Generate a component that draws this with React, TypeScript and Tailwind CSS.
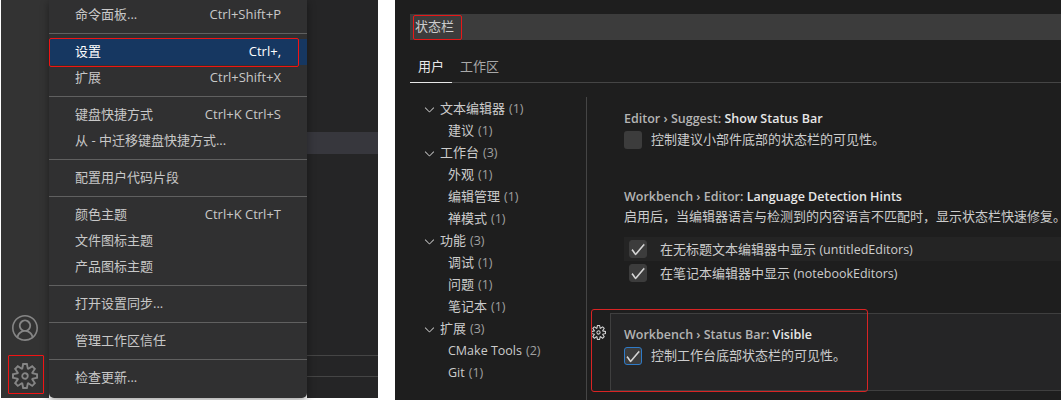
import React from 'react';
import { VscAccount, VscCheck, VscChevronDown, VscSettingsGear } from 'react-icons/vsc';

const FONT = "font-['Open_Sans','Noto_Sans_CJK_SC',sans-serif]";

type Item = { label: string; keys?: string; active?: boolean };

const menuGroups: Item[][] = [
  [{ label: '命令面板...', keys: 'Ctrl+Shift+P' }],
  [{ label: '设置', keys: 'Ctrl+,', active: true }, { label: '扩展', keys: 'Ctrl+Shift+X' }],
  [{ label: '键盘快捷方式', keys: 'Ctrl+K Ctrl+S' }, { label: '从 - 中迁移键盘快捷方式...' }],
  [{ label: '配置用户代码片段' }],
  [{ label: '颜色主题', keys: 'Ctrl+K Ctrl+T' }, { label: '文件图标主题' }, { label: '产品图标主题' }],
  [{ label: '打开设置同步...' }],
  [{ label: '管理工作区信任' }],
  [{ label: '检查更新...' }],
];

const tree = [
  { label: '文本编辑器', count: 1, top: true },
  { label: '建议', count: 1 },
  { label: '工作台', count: 3, top: true },
  { label: '外观', count: 1 },
  { label: '编辑管理', count: 1 },
  { label: '禅模式', count: 1 },
  { label: '功能', count: 3, top: true },
  { label: '调试', count: 1 },
  { label: '问题', count: 1 },
  { label: '笔记本', count: 1 },
  { label: '扩展', count: 3, top: true },
  { label: 'CMake Tools', count: 2, latin: true },
  { label: 'Git', count: 1, latin: true },
];

function Check({ focus }: { focus?: boolean }) {
  return (
    <span className={`flex h-[18px] w-[18px] shrink-0 items-center justify-center rounded-[3px] border bg-[#3c3c3c] text-[#e6e6e6] ${focus ? 'border-[#2f7bc8]' : 'border-[#3c3c3c]'}`}>
      <VscCheck size={17} className="stroke-current stroke-[0.6px]" />
    </span>
  );
}

function Menu() {
  return (
    <div className="relative z-10 h-[398px] w-[258px] shrink-0 rounded-b-[5px] bg-[#303031] pt-[2px] text-[13px] text-[#c8c8c8] shadow-[0_2px_8px_rgba(0,0,0,0.4)]">
      {menuGroups.map((group, i) => (
        <div key={i}>
          {i > 0 && (
            <div className="flex h-[11px] items-center">
              <div className="h-px w-full bg-[#606060]" />
            </div>
          )}
          {group.map((item) => (
            <div
              key={item.label}
              className={`flex h-[26px] items-center justify-between pl-[26px] pr-[26px] ${item.active ? 'bg-[#163761] text-white' : ''}`}
            >
              <span>{item.label}</span>
              {item.keys && <span>{item.keys}</span>}
            </div>
          ))}
        </div>
      ))}
    </div>
  );
}

function LeftShot() {
  return (
    <div className="relative flex h-[398px] w-[378px] shrink-0 pl-px">
      <div className="flex h-full w-[48px] shrink-0 flex-col items-center justify-end bg-[#333333] pb-[9px] text-[#858585]">
        <VscAccount size={26} className="mb-[22px]" />
        <VscSettingsGear size={26} />
      </div>
      <Menu />
      <div className="flex flex-1 flex-col bg-[#252526] pt-[132px]">
        <div className="h-[22px] bg-[#37373d]" />
        <div className="mt-[201px] h-[22px] border-y border-[#454545]" />
      </div>
      <div className="absolute left-[49px] top-[38px] z-20 h-[29px] w-[250px] rounded-[2px] border border-[#f01414]" />
      <div className="absolute left-[8px] top-[355px] z-20 h-[39px] w-[36px] rounded-[1px] border border-[#f01414]" />
    </div>
  );
}

function TreePanel() {
  return (
    <div className="w-[176px] shrink-0 pt-px text-[13px] text-[#cccccc]">
      {tree.map((row) => (
        <div key={row.label} className={`flex h-[22px] items-center ${row.top ? 'pl-[12px]' : 'pl-[38px]'}`}>
          {row.top && <VscChevronDown size={15} className="mr-[3px] text-[#c5c5c5]" />}
          <span className={row.latin ? 'text-[12.5px]' : ''}>{row.label}</span>
          <span className="ml-1 text-[12.5px] text-[#a0a0a0]">({row.count})</span>
        </div>
      ))}
    </div>
  );
}

function Title({ crumb, name }: { crumb: string; name: string }) {
  return (
    <div className="flex h-[20px] items-center whitespace-pre text-[12.5px] font-semibold text-[#b4b4b4]">
      {crumb}
      <span className="text-[#e7e7e7]">{name}</span>
    </div>
  );
}

function SettingsPanel() {
  return (
    <div className="min-w-0 flex-1 border-l border-[#454545] text-[13px] text-[#cccccc]">
      <div className="pl-[37px] pt-[12px]">
        <Title crumb="Editor › Suggest: " name="Show Status Bar" />
        <div className="mt-[2px] flex h-[18px] items-center">
          <span className="h-[18px] w-[18px] rounded-[3px] bg-[#3c3c3c]" />
          <span className="ml-[9px]">控制建议小部件底部的状态栏的可见性。</span>
        </div>
      </div>
      <div className="pl-[37px] pt-[38px]">
        <Title crumb="Workbench › Editor: " name="Language Detection Hints" />
        <div className="flex h-[20px] items-center whitespace-nowrap">启用后，当编辑器语言与检测到的内容语言不匹配时，显示状态栏快速修复。</div>
        <div className="mt-[10px] flex h-[24px] items-center bg-[#242424] pl-[5px]">
          <Check />
          <span className="ml-[13px] pt-px">在无标题文本编辑器中显示 <span className="text-[12.5px]">(untitledEditors)</span></span>
        </div>
        <div className="flex h-[24px] items-center pl-[5px]">
          <Check />
          <span className="ml-[13px] pt-px">在笔记本编辑器中显示 <span className="text-[12.5px]">(notebookEditors)</span></span>
        </div>
      </div>
      <div className="relative ml-[23px] mt-[28px] h-[78px] border-y border-l border-[#3f3f3f] bg-[#252526] pl-[13px] pt-[11px]">
        <VscSettingsGear size={15} className="absolute left-[-20px] top-[11px] text-[#d0d0d0]" />
        <Title crumb="Workbench › Status Bar: " name="Visible" />
        <div className="mt-[2px] flex h-[18px] items-center">
          <Check focus />
          <span className="ml-[9px]">控制工作台底部状态栏的可见性。</span>
        </div>
      </div>
    </div>
  );
}

function RightShot() {
  return (
    <div className="relative ml-[17px] h-[400px] flex-1 overflow-hidden bg-[#1e1e1e] pl-[15px] pt-[14px]">
      <div className="flex h-[26px] items-center bg-[#3c3c3c] pl-[5px] text-[13px] text-[#cccccc]">状态栏</div>
      <div className="mt-[16px] flex h-[27px] gap-[8px] border-b border-[#454545] text-[13px]">
        <span className="h-[27px] border-b border-[#e7e7e7] px-[8px] pt-[1px] text-[#e7e7e7]">用户</span>
        <span className="pt-[1px] text-[#a9a9a9]">工作区</span>
      </div>
      <div className="mt-[14px] flex h-[303px]">
        <TreePanel />
        <SettingsPanel />
      </div>
      <div className="absolute left-[18px] top-[15px] h-[25px] w-[49px] rounded-[2px] border border-[#e81818]" />
      <div className="absolute left-[196px] top-[309px] h-[83px] w-[277px] rounded-[3px] border border-[#d92424]" />
    </div>
  );
}

export default function App() {
  return (
    <div className={`flex h-[400px] w-[1061px] overflow-hidden bg-white ${FONT}`}>
      <LeftShot />
      <RightShot />
    </div>
  );
}
